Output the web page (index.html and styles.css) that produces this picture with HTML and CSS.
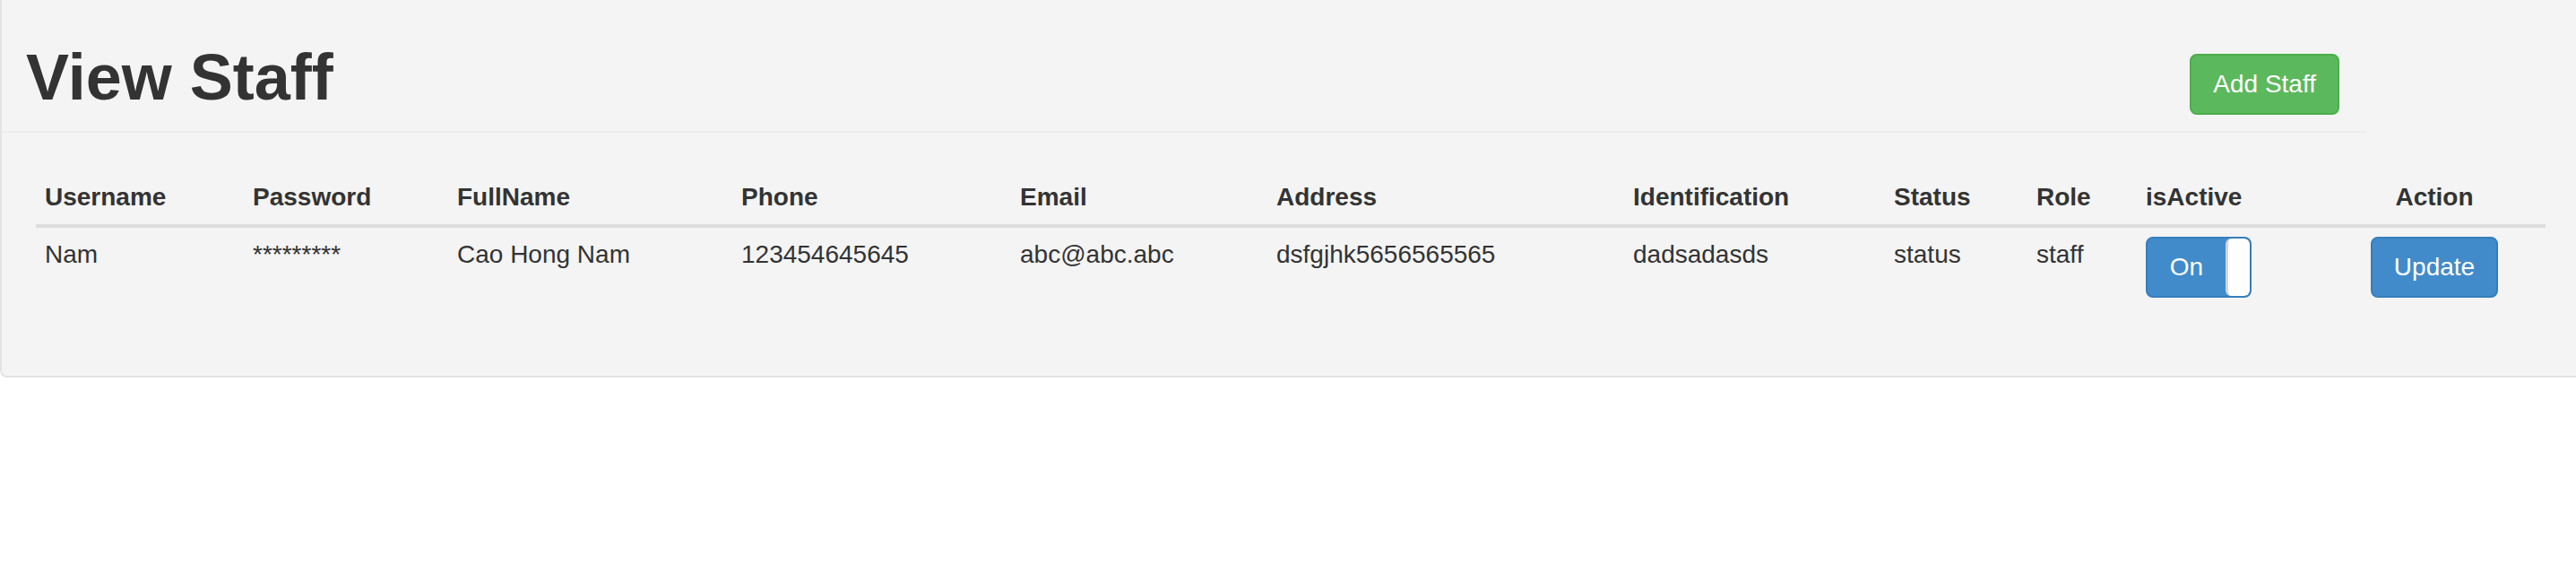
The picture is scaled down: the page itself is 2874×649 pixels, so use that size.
FILE: index.html
```html
<!DOCTYPE html>
<html lang="en">
<head>
<meta charset="utf-8">
<title>View Staff</title>
<link rel="stylesheet" href="styles.css">
</head>
<body>
<div class="well">
  <div class="page-header">
    <h1>View Staff</h1>
    <button class="btn btn-success add-btn" type="button">Add Staff</button>
  </div>
  <table class="table">
    <colgroup>
      <col class="c-user"><col class="c-pass"><col class="c-name"><col class="c-phone">
      <col class="c-email"><col class="c-addr"><col class="c-ident"><col class="c-status">
      <col class="c-role"><col class="c-active"><col class="c-action">
    </colgroup>
    <thead>
      <tr>
        <th>Username</th>
        <th>Password</th>
        <th>FullName</th>
        <th>Phone</th>
        <th>Email</th>
        <th>Address</th>
        <th>Identification</th>
        <th>Status</th>
        <th>Role</th>
        <th>isActive</th>
        <th class="center">Action</th>
      </tr>
    </thead>
    <tbody>
      <tr>
        <td>Nam</td>
        <td>*********</td>
        <td>Cao Hong Nam</td>
        <td>123454645645</td>
        <td>abc@abc.abc</td>
        <td>dsfgjhk5656565565</td>
        <td>dadsadasds</td>
        <td>status</td>
        <td>staff</td>
        <td>
          <div class="toggle">
            <span class="toggle-on">On</span>
            <span class="toggle-handle"></span>
          </div>
        </td>
        <td class="center"><button class="btn btn-primary" type="button">Update</button></td>
      </tr>
    </tbody>
  </table>
</div>
</body>
</html>
```
FILE: styles.css
```css
html, body {
  margin: 0;
  padding: 0;
  background: #ffffff;
}

body {
  font-family: "Liberation Sans", Arial, Helvetica, sans-serif;
  font-size: 28px;
  line-height: 40px;
  color: #333333;
}

.well {
  box-sizing: border-box;
  background: #f4f4f4;
  border: 2px solid #e3e3e3;
  border-top: 0;
  border-right: 0;
  border-radius: 0 0 0 8px;
  padding: 0 0 37px 0;
}

.page-header {
  width: 2638px;
  box-sizing: border-box;
  display: flex;
  justify-content: space-between;
  align-items: flex-start;
  padding: 0 30px 18px 27px;
  border-bottom: 2px solid #ececec;
}

.page-header h1 {
  margin: 47px 0 0 0;
  font-size: 72px;
  line-height: 79px;
  font-weight: bold;
  color: #333333;
}

.btn {
  font-family: inherit;
  font-size: 28px;
  line-height: 40px;
  padding: 12px 24px;
  border: 2px solid transparent;
  border-radius: 8px;
  color: #ffffff;
  cursor: pointer;
  display: inline-block;
  margin: 0;
}

.btn-success {
  background: #5cb85c;
  border-color: #4cae4c;
}

.btn-primary {
  background: #428bca;
  border-color: #357ebd;
}

.add-btn {
  margin-top: 60px;
}

.table {
  margin: 42px 0 40px 38px;
  width: 2800px;
  table-layout: fixed;
  border-collapse: collapse;
  border-spacing: 0;
}

.c-user { width: 232px; }
.c-pass { width: 228px; }
.c-name { width: 317px; }
.c-phone { width: 311px; }
.c-email { width: 286px; }
.c-addr { width: 398px; }
.c-ident { width: 291px; }
.c-status { width: 159px; }
.c-role { width: 122px; }
.c-active { width: 208px; }
.c-action { width: 248px; }

.table th,
.table td {
  padding: 10px;
  text-align: left;
  line-height: 40px;
}

.table th {
  font-weight: bold;
  vertical-align: bottom;
  border-bottom: 4px solid #dddddd;
}

.table td {
  vertical-align: top;
}

.table .center {
  text-align: center;
}

.toggle {
  box-sizing: border-box;
  display: flex;
  width: 118px;
  height: 68px;
  background: #428bca;
  border: 2px solid #357ebd;
  border-radius: 8px;
  overflow: hidden;
}

.toggle-on {
  flex: 1;
  display: flex;
  align-items: center;
  justify-content: center;
  color: #ffffff;
  font-size: 28px;
}

.toggle-handle {
  width: 24px;
  background: #ffffff;
  border-left: 3px solid #d4d4d4;
  border-radius: 6px;
}
```
